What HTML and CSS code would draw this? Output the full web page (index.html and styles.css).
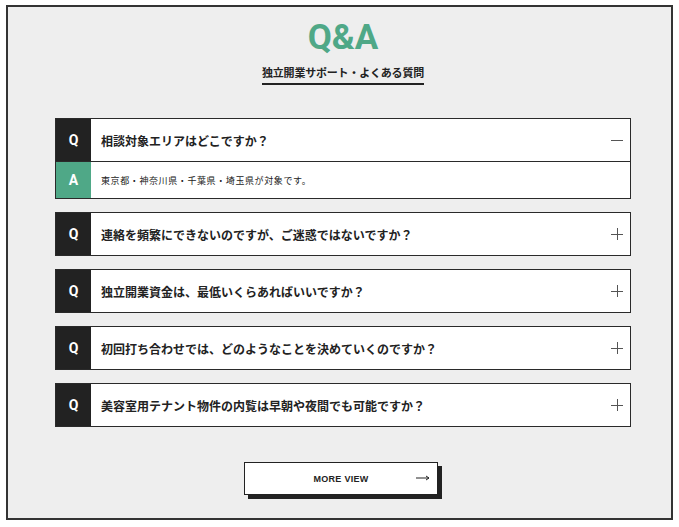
FILE: index.html
```html
<!DOCTYPE html>
<html lang="ja">
<head>
<meta charset="utf-8">
<link rel="stylesheet" href="styles.css">
</head>
<body>
<div class="frame">
  <h1 class="title">Q&amp;A</h1>
  <p class="subtitle">独立開業サポート・よくある質問</p>
  <div class="list">
    <div class="item open">
      <div class="row q-row">
        <div class="badge q">Q</div>
        <div class="text">相談対象エリアはどこですか？</div>
        <span class="icon minus"></span>
      </div>
      <div class="row a-row">
        <div class="badge a">A</div>
        <div class="text answer">東京都・神奈川県・千葉県・埼玉県が対象です。</div>
      </div>
    </div>
    <div class="item">
      <div class="row q-row">
        <div class="badge q">Q</div>
        <div class="text">連絡を頻繁にできないのですが、ご迷惑ではないですか？</div>
        <span class="icon plus"></span>
      </div>
    </div>
    <div class="item">
      <div class="row q-row">
        <div class="badge q">Q</div>
        <div class="text">独立開業資金は、最低いくらあればいいですか？</div>
        <span class="icon plus"></span>
      </div>
    </div>
    <div class="item">
      <div class="row q-row">
        <div class="badge q">Q</div>
        <div class="text">初回打ち合わせでは、どのようなことを決めていくのですか？</div>
        <span class="icon plus"></span>
      </div>
    </div>
    <div class="item">
      <div class="row q-row">
        <div class="badge q">Q</div>
        <div class="text">美容室用テナント物件の内覧は早朝や夜間でも可能ですか？</div>
        <span class="icon plus"></span>
      </div>
    </div>
  </div>
  <div class="btn-wrap">
    <a class="more" href="#">
      <span class="more-label">MORE VIEW</span>
      <svg class="arrow" width="14" height="6" viewBox="0 0 14 6"><path d="M0 3H13M10 1L13 3L10 5" fill="none" stroke="#222" stroke-width="1"/></svg>
    </a>
  </div>
</div>
</body>
</html>
```
FILE: styles.css
```css
* { box-sizing: border-box; }
html, body { margin: 0; padding: 0; }
body {
  width: 679px;
  height: 527px;
  background: #fff;
  font-family: "Noto Sans CJK JP", "Noto Sans", sans-serif;
  color: #222;
}
.frame {
  margin: 5px 6px 0 6px;
  height: 515px;
  border: 2px solid #333;
  background: #eeeeee;
  padding: 11px 40px 0 47px;
  display: flex;
  flex-direction: column;
  align-items: center;
}
.title {
  margin: 0;
  font-family: Roboto, "Liberation Sans", sans-serif;
  font-weight: 700;
  font-size: 35px;
  line-height: 40px;
  color: #4fa887;
  letter-spacing: 0;
}
.subtitle {
  margin: 6px 0 0 0;
  font-size: 11px;
  font-weight: 700;
  line-height: 16px;
  letter-spacing: -0.2px;
  padding-bottom: 3px;
  border-bottom: 2px solid #222;
}
.list {
  width: 100%;
  margin-top: 33px;
  display: flex;
  flex-direction: column;
  gap: 13px;
}
.item {
  border: 1px solid #2a2a2a;
  background: #fff;
}
.row {
  display: flex;
  align-items: stretch;
}
.q-row { height: 42px; }
.a-row {
  height: 37px;
  border-top: 1px solid #2a2a2a;
}
.badge {
  width: 35px;
  flex: none;
  display: flex;
  align-items: center;
  justify-content: center;
  font-family: Roboto, "Liberation Sans", sans-serif;
  font-weight: 700;
  font-size: 14px;
  color: #fff;
}
.badge.q { background: #222; }
.badge.a { background: #4fa887; }
.text {
  flex: 1;
  display: flex;
  align-items: center;
  padding-left: 10px;
  font-size: 12px;
  font-weight: 700;
  letter-spacing: 0;
  color: #222;
}
.text.answer {
  font-size: 9px;
  font-weight: 400;
  letter-spacing: 0.6px;
}
.icon {
  position: relative;
  width: 12px;
  align-self: center;
  height: 12px;
  margin-right: 7px;
  flex: none;
}
.icon::before, .icon::after {
  content: "";
  position: absolute;
  background: #555;
}
.icon::before {
  left: 0; right: 0; top: 5.5px; height: 1px;
}
.plus::after {
  top: 0; bottom: 0; left: 5.5px; width: 1px;
}
.btn-wrap {
  margin-top: 35px;
  display: flex;
  justify-content: center;
  width: 100%;
  padding-right: 4px;
}
.more {
  width: 194px;
  height: 33px;
  border: 1.5px solid #222;
  background: #fff;
  box-shadow: 4px 4px 0 #222;
  display: flex;
  align-items: center;
  justify-content: center;
  position: relative;
  text-decoration: none;
  color: #222;
}
.more-label {
  font-family: "Liberation Sans", Arial, sans-serif;
  font-weight: 700;
  font-size: 9px;
  letter-spacing: 0.3px;
}
.arrow {
  position: absolute;
  right: 7px;
  top: 12px;
}
```
